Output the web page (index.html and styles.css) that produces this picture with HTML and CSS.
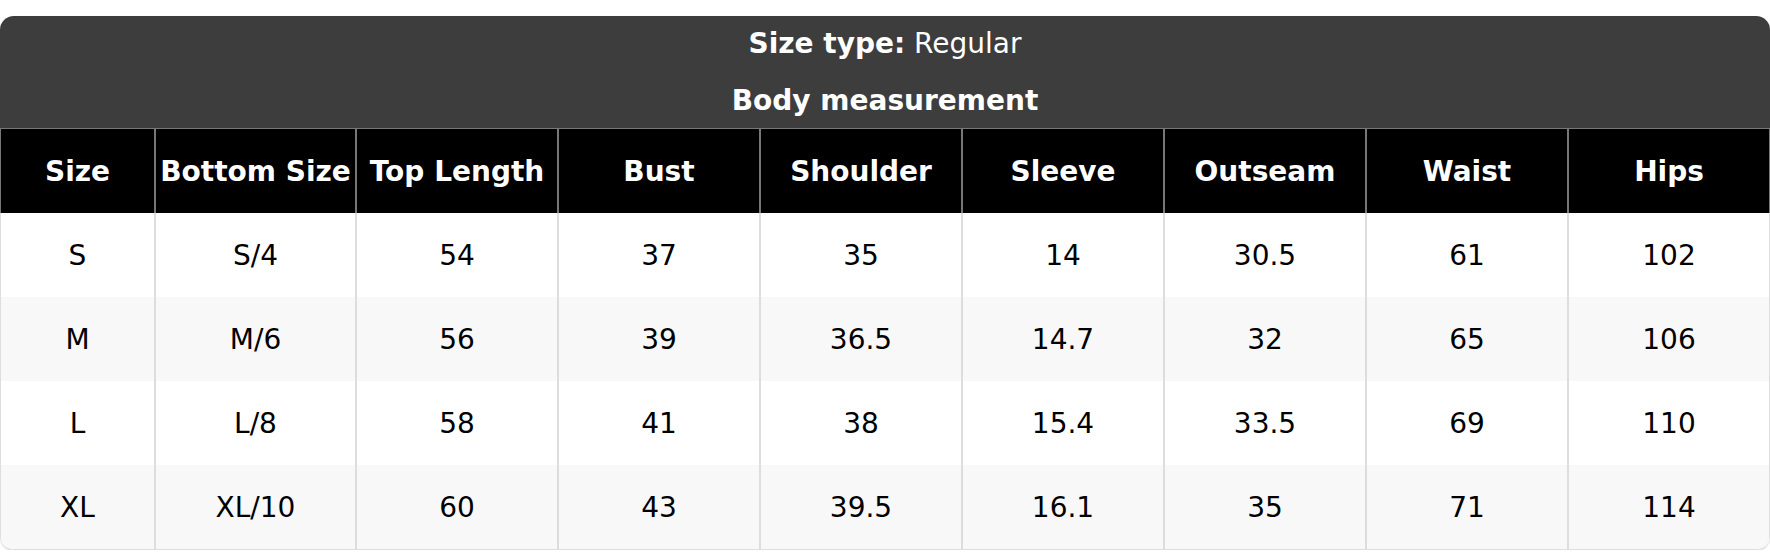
FILE: index.html
```html
<!DOCTYPE html>
<html lang="en">
<head>
<meta charset="utf-8">
<title>Size chart</title>
<link rel="stylesheet" href="styles.css">
</head>
<body>
<div class="card">
  <div class="caption">
    <div class="line"><b>Size type:</b> Regular</div>
    <div class="line title">Body measurement</div>
  </div>
  <table class="chart">
    <colgroup>
      <col class="c-first"><col class="c-second"><col><col><col><col><col><col><col>
    </colgroup>
    <thead>
      <tr><th>Size</th><th>Bottom Size</th><th>Top Length</th><th>Bust</th><th>Shoulder</th><th>Sleeve</th><th>Outseam</th><th>Waist</th><th>Hips</th></tr>
    </thead>
    <tbody>
      <tr><td>S</td><td>S/4</td><td>54</td><td>37</td><td>35</td><td>14</td><td>30.5</td><td>61</td><td>102</td></tr>
      <tr><td>M</td><td>M/6</td><td>56</td><td>39</td><td>36.5</td><td>14.7</td><td>32</td><td>65</td><td>106</td></tr>
      <tr><td>L</td><td>L/8</td><td>58</td><td>41</td><td>38</td><td>15.4</td><td>33.5</td><td>69</td><td>110</td></tr>
      <tr><td>XL</td><td>XL/10</td><td>60</td><td>43</td><td>39.5</td><td>16.1</td><td>35</td><td>71</td><td>114</td></tr>
    </tbody>
  </table>
</div>
</body>
</html>
```

FILE: styles.css
```css
html, body {
  margin: 0;
  background: #fff;
}
body {
  padding-top: 16px;
  font-family: "DejaVu Sans", "Noto Sans", sans-serif;
  color: #000;
}
.card {
  border-radius: 14px;
  overflow: hidden;
  box-shadow: 0 1px 2px rgba(0, 0, 0, 0.18);
  border-bottom: 1px solid #ddd;
}
.caption {
  background: #3d3d3d;
  color: #fff;
  text-align: center;
  font-size: 28px;
  padding: 11px 0 10px;
  display: flex;
  flex-direction: column;
  gap: 23px;
}
.line {
  line-height: 34px;
}
.title {
  font-weight: bold;
}
.chart {
  width: 100%;
  border-collapse: separate;
  border-spacing: 0;
  table-layout: fixed;
  font-size: 28px;
}
.c-first {
  width: 155px;
}
.c-second {
  width: 201px;
}
.chart th {
  background: #000;
  color: #fff;
  font-weight: bold;
  height: 85px;
  padding: 0;
  border-top: 1px solid #777;
  border-left: 1px solid #777;
  border-right: 1px solid #777;
  white-space: nowrap;
  text-align: center;
  box-sizing: border-box;
}
.chart td {
  height: 84px;
  padding: 0;
  text-align: center;
  border-left: 1px solid #ddd;
  border-right: 1px solid #ddd;
  background: #fff;
  box-sizing: border-box;
}
.chart tbody tr:nth-child(even) td {
  background: #f8f8f8;
}
```
